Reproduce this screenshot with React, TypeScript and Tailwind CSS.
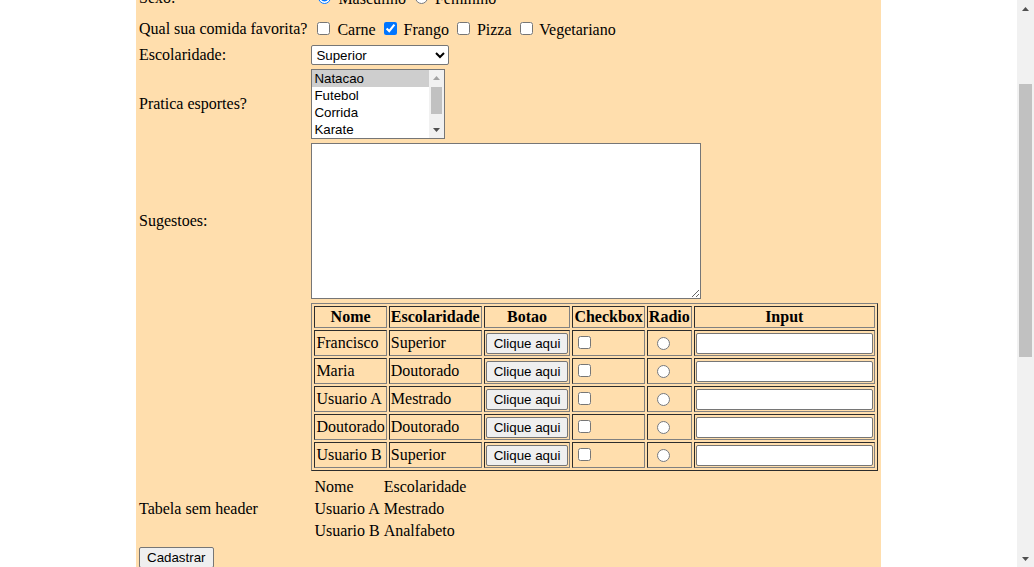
import { useLayoutEffect, useRef } from 'react';

const usuarios = [
  { nome: 'Francisco', escolaridade: 'Superior' },
  { nome: 'Maria', escolaridade: 'Doutorado' },
  { nome: 'Usuario A', escolaridade: 'Mestrado' },
  { nome: 'Doutorado', escolaridade: 'Doutorado' },
  { nome: 'Usuario B', escolaridade: 'Superior' },
];

const esportes = ['Natacao', 'Futebol', 'Corrida', 'Karate'];

const control = "font-['Liberation_Sans'] text-[13.3333px] leading-[normal] text-black";
const textInput = `${control} h-[21px] w-[177px] bg-white border border-[#767676] rounded-[2px] px-[3px] py-[2px]`;
const button = `${control} bg-[#efefef] border border-[#767676] rounded-[2px] px-[7px] py-[2px]`;
const checkbox = 'm-[3px_3px_3px_4px] align-baseline';
const radio = 'm-[3px_3px_0_5px] align-baseline';
const td = 'p-[1px]';
const cell = 'p-[1px] border [border-style:inset] border-[gray]';

function Arrow({ up, color }: { up?: boolean; color: string }) {
  return (
    <svg width="7" height="4" viewBox="0 0 7 4">
      <path d={up ? 'M0 4 L3.5 0 L7 4 Z' : 'M0 0 L3.5 4 L7 0 Z'} fill={color} />
    </svg>
  );
}

// scrollbar drawn by hand, the headless browser hides the native one
function PageScrollbar() {
  return (
    <div className="flex h-[567px] w-[17px] shrink-0 flex-col bg-[#f1f1f1]">
      <div className="flex h-[17px] items-center justify-center">
        <Arrow up color="#505050" />
      </div>
      <div className="flex-1 px-[2px]">
        <div className="mt-[67px] h-[273px] bg-[#c1c1c1]" />
      </div>
      <div className="flex h-[17px] items-center justify-center">
        <Arrow color="#505050" />
      </div>
    </div>
  );
}

function SportsList() {
  return (
    <div role="listbox" className={`${control} flex h-[70px] w-[134px] border border-[#767676] bg-white`}>
      <div className="flex-1">
        {esportes.map(e => (
          <div key={e} className={`h-[17px] pl-[2px] leading-[17px] ${e === 'Natacao' ? 'bg-[#cecece]' : ''}`}>
            {e}
          </div>
        ))}
      </div>
      <div className="flex w-[15px] flex-col bg-[#f1f1f1]">
        <div className="flex h-[16px] items-center justify-center">
          <Arrow up color="#a3a3a3" />
        </div>
        <div className="flex-1 px-[2px]">
          <div className="mt-[1px] h-[27px] bg-[#c1c1c1]" />
        </div>
        <div className="flex h-[16px] items-center justify-center">
          <Arrow color="#505050" />
        </div>
      </div>
    </div>
  );
}

export default function App() {
  const pageRef = useRef<HTMLDivElement>(null);
  const rowRef = useRef<HTMLTableRowElement>(null);

  // keep the page scrolled to the same place as the screenshot
  useLayoutEffect(() => {
    const page = pageRef.current;
    const row = rowRef.current;
    if (!page || !row) return;
    const offset = row.getBoundingClientRect().top - page.getBoundingClientRect().top + page.scrollTop;
    page.scrollTop = offset - 44;
  }, []);

  return (
    <div className="flex h-[567px] bg-white">
      <div ref={pageRef} className="h-[567px] flex-1 overflow-y-scroll">
        <div className="mx-auto w-[745px] min-h-[1107px] bg-[#ffdead] font-['Liberation_Serif'] text-[16px] leading-[normal] text-black">
          <h1 className="text-[32px] font-bold py-[21px] pl-[3px]">Cadastro</h1>
          <form>
            <table className="border-separate border-spacing-[2px]">
              <tbody>
                <tr>
                  <td className={td}>Nome:</td>
                  <td className={td}><input type="text" className={textInput} /></td>
                </tr>
                <tr>
                  <td className={td}>Email:</td>
                  <td className={td}><input type="text" className={textInput} /></td>
                </tr>
                <tr>
                  <td className="p-[1px] pb-[8px]">Sexo:</td>
                  <td className="p-[1px] pb-[8px]">
                    <input type="radio" name="sexo" defaultChecked className="m-[3px_3px_0_7px] align-baseline" /> Masculino{' '}
                    <input type="radio" name="sexo" className={radio} /> Feminino
                  </td>
                </tr>
                <tr>
                  <td className="p-[1px] pb-[3px]">Qual sua comida favorita?</td>
                  <td className="p-[1px] pb-[3px]">
                    <input type="checkbox" className="m-[3px_3px_3px_6px] align-baseline" /> Carne{' '}
                    <input type="checkbox" defaultChecked className={checkbox} /> Frango{' '}
                    <input type="checkbox" className={checkbox} /> Pizza{' '}
                    <input type="checkbox" className={checkbox} /> Vegetariano
                  </td>
                </tr>
                <tr ref={rowRef}>
                  <td className={td}>Escolaridade:</td>
                  <td className={td}>
                    <select defaultValue="Superior" className={`${control} h-[20px] w-[138px] bg-white border border-[#767676] rounded-[2px]`}>
                      <option>Analfabeto</option>
                      <option>Fundamental</option>
                      <option>Medio</option>
                      <option>Superior</option>
                      <option>Mestrado</option>
                      <option>Doutorado</option>
                    </select>
                  </td>
                </tr>
                <tr>
                  <td className={td}>Pratica esportes?</td>
                  <td className={td}>
                    <SportsList />
                  </td>
                </tr>
                <tr>
                  <td className={td}>Sugestoes:</td>
                  <td className={td}>
                    <textarea className={`${control} block h-[156px] w-[390px] bg-white border border-[#767676] p-[2px]`} />
                  </td>
                </tr>
                <tr>
                  <td className={td}></td>
                  <td className={td}>
                    <table className="border-separate border-spacing-[2px] border [border-style:outset] border-[gray]">
                      <thead>
                        <tr>
                          <th className={`${cell} font-bold text-center`}>Nome</th>
                          <th className={`${cell} font-bold text-center`}>Escolaridade</th>
                          <th className={`${cell} font-bold text-center`}>Botao</th>
                          <th className={`${cell} font-bold text-center`}>Checkbox</th>
                          <th className={`${cell} font-bold text-center`}>Radio</th>
                          <th className={`${cell} font-bold text-center`}>Input</th>
                        </tr>
                      </thead>
                      <tbody>
                        {usuarios.map((u, i) => (
                          <tr key={i}>
                            <td className={`${cell} h-[26px]`}>{u.nome}</td>
                            <td className={`${cell} h-[26px]`}>{u.escolaridade}</td>
                            <td className={`${cell} h-[26px]`}><button type="button" className={button}>Clique aqui</button></td>
                            <td className={`${cell} h-[26px]`}><input type="checkbox" className={checkbox} /></td>
                            <td className={`${cell} h-[26px] align-bottom`}><input type="radio" name={`radio${i}`} className="m-[3px_3px_0_8px] align-baseline" /></td>
                            <td className={`${cell} h-[26px]`}><input type="text" className={textInput} /></td>
                          </tr>
                        ))}
                      </tbody>
                    </table>
                  </td>
                </tr>
                <tr>
                  <td className={td}>Tabela sem header</td>
                  <td className={td}>
                    <table className="border-separate border-spacing-[2px]">
                      <tbody>
                        <tr>
                          <td className={td}>Nome</td>
                          <td className={td}>Escolaridade</td>
                        </tr>
                        <tr>
                          <td className={td}>Usuario A</td>
                          <td className={td}>Mestrado</td>
                        </tr>
                        <tr>
                          <td className={td}>Usuario B</td>
                          <td className={td}>Analfabeto</td>
                        </tr>
                      </tbody>
                    </table>
                  </td>
                </tr>
                <tr>
                  <td className={td}>
                    <button type="button" className={button}>Cadastrar</button>
                  </td>
                </tr>
              </tbody>
            </table>
          </form>
        </div>
      </div>
      <PageScrollbar />
    </div>
  );
}
